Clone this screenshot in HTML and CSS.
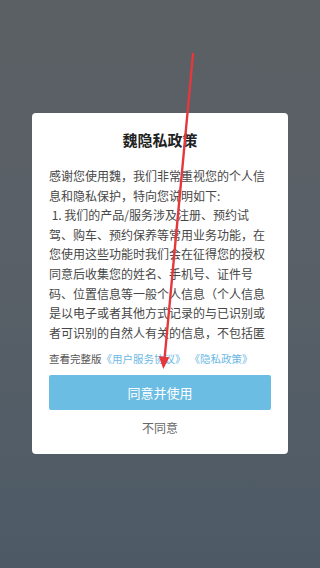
FILE: index.html
```html
<!DOCTYPE html>
<html lang="zh-CN">
<head>
<meta charset="utf-8">
<title>魏隐私政策</title>
<link rel="stylesheet" href="styles.css">
</head>
<body>
<div class="screen">
  <div class="dialog">
    <h1 class="title">魏隐私政策</h1>
    <div class="content">
      <span class="line">感谢您使用魏，我们非常重视您的个人信</span>
      <span class="line">息和隐私保护，特向您说明如下:</span>
      <span class="line"> 1. 我们的产品/服务涉及注册、预约试</span>
      <span class="line">驾、购车、预约保养等常用业务功能，在</span>
      <span class="line">您使用这些功能时我们会在征得您的授权</span>
      <span class="line">同意后收集您的姓名、手机号、证件号</span>
      <span class="line">码、位置信息等一般个人信息（个人信息</span>
      <span class="line">是以电子或者其他方式记录的与已识别或</span>
      <span class="line">者可识别的自然人有关的信息，不包括匿</span>
      <span class="line">名化处理后的信息）。</span>
    </div>
    <div class="links"><span class="label">查看完整版</span><a class="link">《用户服务协议》</a><a class="link second">《隐私政策》</a></div>
    <button class="agree">同意并使用</button>
    <button class="disagree">不同意</button>
  </div>
  <svg class="arrow" width="320" height="568" viewBox="0 0 320 568">
    <line x1="193" y1="54" x2="164.6" y2="358" stroke="#e5383d" stroke-width="2.4" stroke-linecap="round"/>
    <polygon points="163.3,369 158.8,356.3 169.4,357.3" fill="#e5383d"/>
  </svg>
</div>
</body>
</html>
```
FILE: styles.css
```css
html, body {
  margin: 0;
  padding: 0;
}
body {
  font-family: "Noto Sans CJK SC", "Noto Sans", sans-serif;
}
.screen {
  position: relative;
  width: 320px;
  height: 568px;
  overflow: hidden;
  background: linear-gradient(180deg, #5b6064 0%, #596067 45%, #4d5a66 100%);
  display: flex;
  flex-direction: column;
  align-items: center;
  padding-top: 113px;
  box-sizing: border-box;
}
.dialog {
  width: 256px;
  height: 341px;
  box-sizing: border-box;
  background: #fff;
  border-radius: 4px;
  padding: 17px 17px 16px;
  display: flex;
  flex-direction: column;
}
.title {
  margin: 0;
  font-size: 15px;
  line-height: 20px;
  font-weight: bold;
  color: #222;
  text-align: center;
}
.content {
  margin-top: 16px;
  height: 176px;
  overflow: hidden;
  font-size: 12px;
  line-height: 19.6px;
  color: #474747;
}
.line {
  display: block;
  white-space: pre;
}
.links {
  margin-top: 9px;
  display: flex;
  font-size: 10.5px;
  line-height: 16px;
  color: #555;
  white-space: nowrap;
}
.link {
  color: #6cb8e4;
}
.second {
  margin-left: 4px;
}
.agree {
  margin-top: 8px;
  height: 35px;
  border: none;
  border-radius: 2px;
  background: #6bbde3;
  color: #fff;
  font-family: inherit;
  font-size: 13px;
  padding: 0;
}
.disagree {
  margin-top: 8px;
  height: 20px;
  border: none;
  background: none;
  color: #666;
  font-family: inherit;
  font-size: 12px;
  line-height: 20px;
  padding: 0;
}
.arrow {
  position: absolute;
  left: 0;
  top: 0;
  pointer-events: none;
}
```
